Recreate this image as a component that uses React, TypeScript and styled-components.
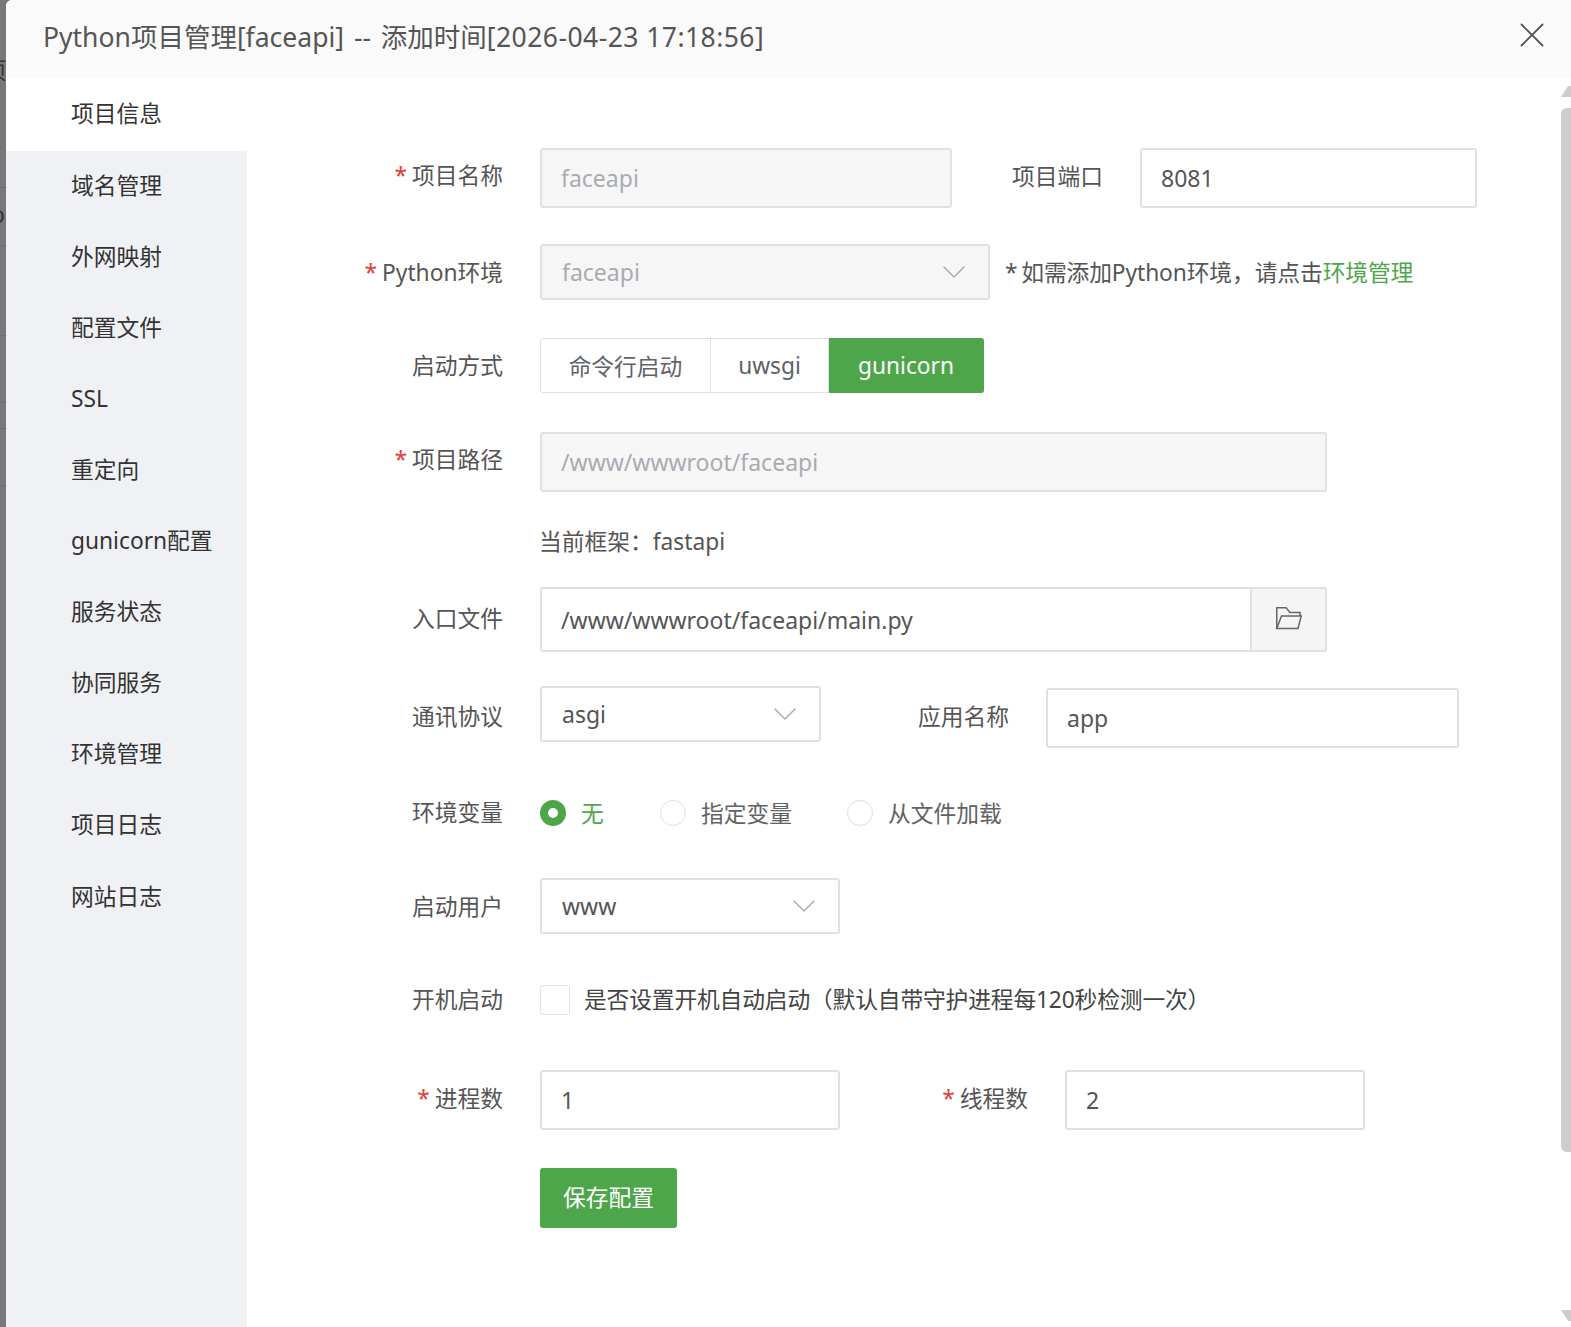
import React from 'react'
import styled, { createGlobalStyle } from 'styled-components'
import { ChevronDown, X } from 'lucide-react'

const GlobalStyle = createGlobalStyle`
  html, body {
    margin: 0;
    padding: 0;
    background: #787878;
  }
  body {
    font-family: "Noto Sans", "Noto Sans CJK SC", sans-serif;
    color: #555;
  }
`

const Page = styled.div`
  width: 1571px;
  height: 1327px;
  display: flex;
  overflow: hidden;
`

const Backdrop = styled.div`
  width: 6px;
  flex: none;
  overflow: hidden;
  padding-top: 54px;
  box-sizing: border-box;
  background:
    linear-gradient(#6c6c6c, #6c6c6c) 0 187px / 100% 1px no-repeat,
    linear-gradient(#6c6c6c, #6c6c6c) 0 245px / 100% 1px no-repeat,
    linear-gradient(#6c6c6c, #6c6c6c) 0 335px / 100% 1px no-repeat,
    linear-gradient(#6c6c6c, #6c6c6c) 0 402px / 100% 1px no-repeat,
    linear-gradient(#6c6c6c, #6c6c6c) 0 428px / 100% 1px no-repeat,
    linear-gradient(#6c6c6c, #6c6c6c) 0 485px / 100% 1px no-repeat,
    #787878;
`

const BackdropText = styled.div<{ $mt?: number; $ml: number }>`
  margin: ${p => p.$mt ?? 0}px 0 0 ${p => p.$ml}px;
  font-size: 23px;
  line-height: 32px;
  color: #333;
  white-space: nowrap;
`

const Dialog = styled.div`
  flex: 1;
  display: flex;
  flex-direction: column;
  background: #fff;
  border-top-left-radius: 6px;
  overflow: hidden;
`

const Header = styled.div`
  height: 78px;
  flex: none;
  display: flex;
  align-items: center;
  justify-content: space-between;
  padding: 0 18px 8px 37px;
  box-sizing: border-box;
  background: #fafafa;
  font-size: 26.5px;
  word-spacing: 3px;
  color: #555;
  white-space: nowrap;
`

const TitleTime = styled.span`
  word-spacing: 0;
  letter-spacing: 0.45px;
`

const Close = styled.span`
  display: flex;
  color: #555;
`

const Body = styled.div`
  flex: 1;
  display: flex;
  min-height: 0;
`

const Sidebar = styled.div`
  width: 241px;
  flex: none;
  background: #f0f1f5;
`

const MenuItem = styled.div<{ $active?: boolean }>`
  height: ${p => (p.$active ? 71.6 : 71.1)}px;
  line-height: 71px;
  padding-left: 65px;
  font-size: 22.75px;
  color: #333;
  white-space: nowrap;
  background: ${p => (p.$active ? '#fff' : 'transparent')};
  box-shadow: ${p => (p.$active ? '0 1px 0 #fff' : 'none')};
`

const Content = styled.div`
  flex: 1;
  padding-top: 70px;
  min-width: 0;
`

const Row = styled.div<{ $mt?: number }>`
  display: flex;
  align-items: center;
  margin-top: ${p => p.$mt ?? 0}px;
`

const Label = styled.label<{ $width?: number; $required?: boolean; $nudge?: number }>`
  width: ${p => p.$width ?? 256}px;
  flex: none;
  text-align: right;
  font-size: 22.75px;
  color: #555;
  white-space: nowrap;
  margin-right: 37px;
  margin-top: ${p => p.$nudge ?? -4}px;

  ${p => p.$required && `
    &::before {
      content: '*';
      color: #e0403a;
      margin-right: 5px;
    }
  `}
`

const Input = styled.div<{ $width: number; $disabled?: boolean }>`
  width: ${p => p.$width}px;
  height: 60px;
  flex: none;
  box-sizing: border-box;
  display: flex;
  align-items: center;
  padding: 0 19px;
  border: 2px solid #e0e0e6;
  border-radius: 3px;
  font-size: 23px;
  color: ${p => (p.$disabled ? '#a8abb2' : '#555')};
  background: ${p => (p.$disabled ? '#f6f6f6' : '#fff')};
  white-space: nowrap;
`

const Select = styled.div<{ $width: number; $disabled?: boolean; $raised?: boolean }>`
  width: ${p => p.$width}px;
  height: 56px;
  flex: none;
  box-sizing: border-box;
  display: flex;
  align-items: center;
  justify-content: space-between;
  padding: 0 14px 0 20px;
  border: 2px solid #e0e0e6;
  border-radius: 3px;
  font-size: 23px;
  color: ${p => (p.$disabled ? '#a8abb2' : '#555')};
  background: ${p => (p.$disabled ? '#f6f6f6' : '#fff')};
  ${p => p.$raised && 'margin: -4px 0 4px;'}

  svg {
    color: #a3a6ad;
    flex: none;
  }
`

const Hint = styled.span`
  margin: -2px 0 0 15px;
  font-size: 22.75px;
  word-spacing: -2px;
  letter-spacing: -0.1px;
  color: #555;
  white-space: nowrap;

  b {
    font-weight: 400;
    color: #4ea64b;
  }
`

const ButtonGroup = styled.div`
  display: flex;
  height: 55px;
`

const Segment = styled.div<{ $width: number; $active?: boolean }>`
  width: ${p => p.$width}px;
  box-sizing: border-box;
  display: flex;
  align-items: center;
  justify-content: center;
  font-size: 22.75px;
  padding-bottom: 1px;
  border: 1.5px solid ${p => (p.$active ? '#4ea64b' : '#e0e0e6')};
  border-left-width: 0;
  color: ${p => (p.$active ? '#fff' : '#606266')};
  background: ${p => (p.$active ? '#4ea64b' : '#fff')};

  &:first-child {
    border-left-width: 1.5px;
    border-radius: 3px 0 0 3px;
  }
  &:last-child {
    border-radius: 0 3px 3px 0;
  }
`

const Info = styled.div`
  margin: 32px 0 0 292px;
  height: 36px;
  line-height: 36px;
  font-size: 22.75px;
  color: #555;
`

const InputGroup = styled.div`
  width: 787px;
  height: 65px;
  flex: none;
  display: flex;
  box-sizing: border-box;
  border: 2px solid #e0e0e6;
  border-radius: 3px;
`

const GroupValue = styled.div`
  flex: 1;
  display: flex;
  align-items: center;
  padding: 0 19px;
  font-size: 23px;
  color: #555;
`

const Addon = styled.div`
  width: 75px;
  display: flex;
  align-items: center;
  justify-content: center;
  padding-bottom: 3px;
  box-sizing: border-box;
  border-left: 2px solid #e0e0e6;
  background: #f5f5f5;
  color: #666;
`

const Radios = styled.div`
  display: flex;
  align-items: center;
`

const Radio = styled.div<{ $width: number; $checked?: boolean }>`
  width: ${p => p.$width}px;
  display: flex;
  align-items: center;
  gap: 15px;
  font-size: 22.75px;
  color: ${p => (p.$checked ? '#4ea64b' : '#606266')};
  white-space: nowrap;
`

const RadioDot = styled.span<{ $checked?: boolean }>`
  width: 26px;
  height: 26px;
  flex: none;
  box-sizing: border-box;
  border-radius: 50%;
  border: ${p => (p.$checked ? '8.5px solid #4ea64b' : '1.5px solid #e0e0e6')};
  background: #fff;
`

const Checkbox = styled.span`
  width: 30px;
  height: 30px;
  flex: none;
  box-sizing: border-box;
  border: 1.5px solid #e0e0e6;
  border-radius: 3px;
  margin-right: 14px;
`

const CheckText = styled.span`
  font-size: 22.75px;
  letter-spacing: -0.15px;
  color: #444;
  white-space: nowrap;
  margin-top: -3px;
`

const SaveButton = styled.div`
  width: 137px;
  height: 60px;
  margin: 38px 0 0 293px;
  padding-bottom: 3px;
  box-sizing: border-box;
  display: flex;
  align-items: center;
  justify-content: center;
  font-size: 22.75px;
  color: #fff;
  background: #4ea64b;
  border-radius: 3px;
`

const Scrollbar = styled.div`
  width: 10px;
  flex: none;
  display: flex;
  flex-direction: column;
  align-items: stretch;
  padding-top: 8px;
  height: 1243px;
  box-sizing: border-box;
`

const Arrow = styled.span<{ $down?: boolean }>`
  height: 11px;
  flex: none;
  background: #cdcdcd;
  clip-path: ${p => (p.$down
    ? 'polygon(0 0, 100% 0, 100% 100%, 70% 100%)'
    : 'polygon(70% 0, 100% 0, 100% 100%, 0 100%)')};
`

const Thumb = styled.span`
  height: 1044px;
  flex: none;
  margin: 11px 0 158px;
  background: #cdcdcd;
  border-radius: 6px 0 0 6px;
`

const menu = ['项目信息', '域名管理', '外网映射', '配置文件', 'SSL', '重定向', 'gunicorn配置', '服务状态', '协同服务', '环境管理', '项目日志', '网站日志']

const Chevron = () => <ChevronDown size={40} strokeWidth={0.8} />

const FolderIcon = () => (
  <svg width="26" height="23" viewBox="0 0 26 23" fill="none" stroke="currentColor" strokeWidth="1.5">
    <path d="M0.75 21.5V0.75H10L14 5.5H24V9" />
    <path d="M5.5 9H25.2L22 21.5H0.75L5.5 9Z" />
  </svg>
)

export default function App() {
  return (
    <Page>
      <GlobalStyle />
      <Backdrop>
        <BackdropText $ml={-17}>项</BackdropText>
        <BackdropText $ml={-9} $mt={112}>o</BackdropText>
      </Backdrop>
      <Dialog>
        <Header>
          <span>Python项目管理[faceapi] -- 添加时间<TitleTime>[2026-04-23 17:18:56]</TitleTime></span>
          <Close><X size={42} strokeWidth={1.05} /></Close>
        </Header>
        <Body>
          <Sidebar>
            {menu.map((m, i) => <MenuItem key={m} $active={i === 0}>{m}</MenuItem>)}
          </Sidebar>
          <Content>
            <Row>
              <Label $required $nudge={-8}>项目名称</Label>
              <Input $width={412} $disabled>faceapi</Input>
              <Label $width={151} $nudge={-6}>项目端口</Label>
              <Input $width={337}>8081</Input>
            </Row>
            <Row $mt={36}>
              <Label $required $nudge={-2}>Python环境</Label>
              <Select $width={450} $disabled>faceapi<Chevron /></Select>
              <Hint>* 如需添加Python环境，请点击<b>环境管理</b></Hint>
            </Row>
            <Row $mt={38}>
              <Label $nudge={-2}>启动方式</Label>
              <ButtonGroup>
                <Segment $width={171}>命令行启动</Segment>
                <Segment $width={118}>uwsgi</Segment>
                <Segment $width={155} $active>gunicorn</Segment>
              </ButtonGroup>
            </Row>
            <Row $mt={39}>
              <Label $required $nudge={-8}>项目路径</Label>
              <Input $width={787} $disabled>/www/wwwroot/faceapi</Input>
            </Row>
            <Info>当前框架：fastapi</Info>
            <Row $mt={27}>
              <Label $nudge={-4}>入口文件</Label>
              <InputGroup>
                <GroupValue>/www/wwwroot/faceapi/main.py</GroupValue>
                <Addon><FolderIcon /></Addon>
              </InputGroup>
            </Row>
            <Row $mt={36}>
              <Label $nudge={-6}>通讯协议</Label>
              <Select $width={281} $raised>asgi<Chevron /></Select>
              <Label $width={188} $nudge={-6}>应用名称</Label>
              <Input $width={413}>app</Input>
            </Row>
            <Row $mt={48}>
              <Label $nudge={-2}>环境变量</Label>
              <Radios>
                <Radio $width={120} $checked><RadioDot $checked />无</Radio>
                <Radio $width={187}><RadioDot />指定变量</Radio>
                <Radio $width={200}><RadioDot />从文件加载</Radio>
              </Radios>
            </Row>
            <Row $mt={49}>
              <Label $nudge={-2}>启动用户</Label>
              <Select $width={300}>www<Chevron /></Select>
            </Row>
            <Row $mt={51}>
              <Label>开机启动</Label>
              <Checkbox />
              <CheckText>是否设置开机自动启动（默认自带守护进程每120秒检测一次）</CheckText>
            </Row>
            <Row $mt={55}>
              <Label $required $nudge={-6}>进程数</Label>
              <Input $width={300}>1</Input>
              <Label $width={188} $required $nudge={-6}>线程数</Label>
              <Input $width={300}>2</Input>
            </Row>
            <SaveButton>保存配置</SaveButton>
          </Content>
          <Scrollbar>
            <Arrow />
            <Thumb />
            <Arrow $down />
          </Scrollbar>
        </Body>
      </Dialog>
    </Page>
  )
}
